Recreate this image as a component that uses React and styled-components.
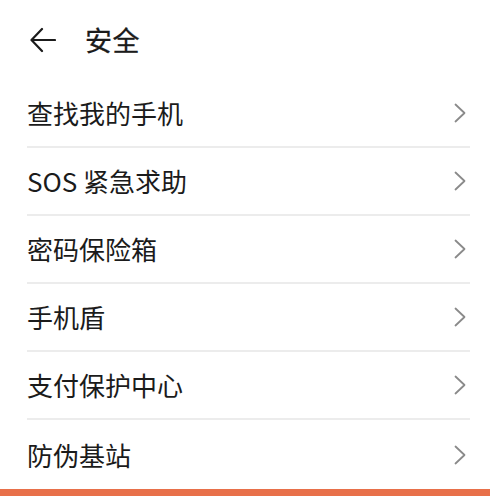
import { styled, createGlobalStyle } from 'styled-components';

const items = ['查找我的手机', 'SOS 紧急求助', '密码保险箱', '手机盾', '支付保护中心', '防伪基站'];

const Global = createGlobalStyle`
	html, body {
		margin: 0;
		padding: 0;
		background: #ffffff;
	}
	body {
		font-family: "Noto Sans CJK SC", "Noto Sans", sans-serif;
		color: #1b1b1b;
	}
`;

const BackIcon = () => (
	<svg width="26" height="26" viewBox="0 0 26 26" fill="none" stroke="#1b1b1b" strokeWidth="2.2" strokeLinecap="round" strokeLinejoin="round">
		<path d="M25 13H2" />
		<path d="M12 2L1.5 13L12 24" />
	</svg>
);

const Chevron = () => (
	<svg width="12" height="20" viewBox="0 0 12 20" fill="none" stroke="#8a8a8a" strokeWidth="1.8" strokeLinecap="round" strokeLinejoin="round">
		<path d="M1.5 1.5L10.5 10L1.5 18.5" />
	</svg>
);

const App = () => {
	return (
		<Page>
			<Global />
			<Header>
				<BackIcon />
				<Title>安全</Title>
			</Header>
			<List>
				{items.map((label, i) => (
					<Row key={label} $last={i === items.length - 1}>
						<Label>{label}</Label>
						<Chevron />
					</Row>
				))}
			</List>
			<BottomBar />
		</Page>
	);
};

const Page = styled.div`
	width: 500px;
	height: 496px;
	display: flex;
	flex-direction: column;
	overflow: hidden;
	background: #fff;
`;
const Header = styled.div`
	height: 80px;
	display: flex;
	align-items: center;
	padding-left: 30px;
	padding-bottom: 1px;
	box-sizing: border-box;
	gap: 29px;
`;
const Title = styled.div`
	font-size: 27px;
	font-weight: 400;
	line-height: 1;
	letter-spacing: 0.5px;
	-webkit-text-stroke: 0.3px #1b1b1b;
`;
const List = styled.div`
	display: flex;
	flex-direction: column;
	margin-left: 27px;
	margin-right: 30px;
`;
const Row = styled.div`
	height: 68px;
	display: flex;
	align-items: center;
	justify-content: space-between;
	padding-right: 4px;
	box-sizing: border-box;
	border-bottom: ${({ $last }) => ($last ? 'none' : '2px solid #ececec')};
	padding-top: ${({ $last }) => ($last ? '2px' : '0')};
`;
const Label = styled.div`
	font-size: 26px;
	font-weight: 400;
	line-height: 1;
`;
const BottomBar = styled.div`
	margin-top: auto;
	height: 7px;
	width: 490px;
	background: #e8704a;
`;

export default App;
